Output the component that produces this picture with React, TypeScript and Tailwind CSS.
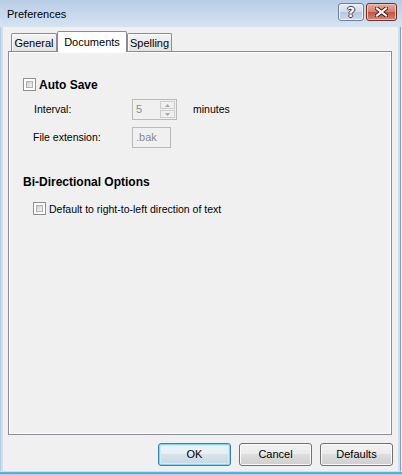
import React from 'react';

const Check: React.FC = () => (
  <div className="w-[13px] h-[13px] shrink-0 border border-[#8f8f8f] bg-white p-[2px]">
    <div className="w-full h-full border border-[#b1b1b1] bg-linear-to-br from-[#cdcdcd] to-[#f6f6f6]" />
  </div>
);

const Tab: React.FC<{ label: string; active?: boolean; w: string }> = ({ label, active, w }) =>
  active ? (
    <div className={`${w} h-[21px] -mb-px z-10 flex items-center justify-center border border-b-0 border-[#898c95] bg-white rounded-t-[2px] text-[11px] text-black`}>
      {label}
    </div>
  ) : (
    <div className={`${w} h-[18px] flex items-center justify-center border border-b-0 border-[#898c95] bg-linear-to-b from-[#f4f4f4] to-[#e4e4e4] shadow-[inset_1px_1px_0_#ffffff] rounded-t-[2px] text-[11px] text-black pt-[1px]`}>
      {label}
    </div>
  );

const Button: React.FC<{ label: string; primary?: boolean }> = ({ label, primary }) => (
  <div
    className={
      primary
        ? 'w-[73px] h-[23px] rounded-[3px] border border-[#3c7fb1] flex items-center justify-center text-[11px] text-black bg-[linear-gradient(to_bottom,#eef5f9_0%,#e6eef3_50%,#d7e2e9_50%,#cad8e1_100%)] shadow-[inset_0_0_0_1px_#7fd7f7,inset_0_0_0_2px_#c9eefc]'
        : 'w-[73px] h-[23px] rounded-[3px] border border-[#707070] flex items-center justify-center text-[11px] text-black bg-[linear-gradient(to_bottom,#f2f2f2_0%,#ebebeb_50%,#dddddd_50%,#cfcfcf_100%)] shadow-[inset_0_0_0_1px_#fbfbfb]'
    }
  >
    {label}
  </div>
);

const App: React.FC = () => {
  return (
    <div className="w-[402px] h-[475px] flex flex-col bg-[#c9daee] font-['Liberation_Sans',Arial,sans-serif] text-[10.5px] text-black overflow-hidden">
      {/* title bar */}
      <div className="h-[27px] shrink-0 flex items-start pl-[7px] pr-[5px] pt-[3px] bg-linear-to-b from-[#b8cde6] to-[#d6e3f2]">
        <span className="mt-[4px] text-[11px] leading-[14px] text-black">Preferences</span>
        <div className="ml-auto flex gap-[2px]">
          <div className="w-[26px] h-[18px] rounded-[3px] border border-[#6b7f99] flex items-center justify-center bg-[linear-gradient(to_bottom,#e6eef8_0%,#cfdcec_50%,#b5c8e0_50%,#cbd9eb_100%)] shadow-[inset_0_0_0_1px_#eef4fb]">
            <span className="font-['DejaVu_Sans',sans-serif] text-[14px] font-bold leading-none text-white [text-shadow:1px_0_0_#33465e,-1px_0_0_#33465e,0_1px_0_#33465e,0_-1px_0_#33465e]">?</span>
          </div>
          <div className="w-[31px] h-[18px] rounded-[3px] border border-[#6d2f27] flex items-center justify-center bg-[linear-gradient(to_bottom,#e9a997_0%,#d8806f_50%,#c3513f_50%,#d48776_100%)] shadow-[inset_0_0_0_1px_#f0c3b6]">
            <svg width="13" height="10" viewBox="0 0 13 10">
              <path d="M2 1.5 L11 8.5 M11 1.5 L2 8.5" stroke="#3a1712" strokeWidth="4" strokeLinecap="square" fill="none" />
              <path d="M2 1.5 L11 8.5 M11 1.5 L2 8.5" stroke="#ffffff" strokeWidth="2.2" strokeLinecap="square" fill="none" />
            </svg>
          </div>
        </div>
      </div>

      <div className="flex-1 flex min-h-0">
        {/* left frame */}
        <div className="w-[3px] shrink-0 bg-[linear-gradient(to_right,#b7cbe2_0_1px,#cfdeef_1px)]" />

        {/* client */}
        <div className="flex-1 flex flex-col bg-[#f0f0f0]">
          <div className="flex items-end h-[24px] pl-[8px]">
            <Tab label="General" w="w-[46px]" />
            <Tab label="Documents" w="w-[70px]" active />
            <Tab label="Spelling" w="w-[45px]" />
          </div>

          <div className="ml-[5px] mr-[6px] h-[384px] border border-[#898c95] shadow-[inset_1px_1px_0_#ffffff,inset_-1px_-1px_0_#ffffff] bg-[#f0f0f0] pl-[14px] pt-[26px] flex flex-col">
            <div className="flex items-center h-[13px] gap-[3px]">
              <Check />
              <span className="font-bold text-[12px] leading-[14px]">Auto Save</span>
            </div>

            <div className="flex items-center h-[21px] mt-[8px] pl-[11px]">
              <span className="w-[98px] shrink-0">Interval:</span>
              <div className="w-[45px] h-[21px] border border-[#b9b9b9] bg-[#f0f0f0] flex">
                <span className="flex-1 pl-[3px] leading-[19px] text-[11px] text-[#8a8a8a]">5</span>
                <div className="w-[17px] flex flex-col p-px gap-px">
                  <div className="flex-1 border border-[#cdcdcd] bg-[#efefef] flex items-center justify-center">
                    <svg width="5" height="3" viewBox="0 0 5 3"><path d="M0 3 L2.5 0 L5 3 Z" fill="#a8a8a8" /></svg>
                  </div>
                  <div className="flex-1 border border-[#cdcdcd] bg-[#efefef] flex items-center justify-center">
                    <svg width="5" height="3" viewBox="0 0 5 3"><path d="M0 0 L2.5 3 L5 0 Z" fill="#a8a8a8" /></svg>
                  </div>
                </div>
              </div>
              <span className="ml-[16px]">minutes</span>
            </div>

            <div className="flex items-center h-[21px] mt-[7px] pl-[10px]">
              <span className="w-[99px] shrink-0">File extension:</span>
              <div className="w-[39px] h-[21px] border border-[#b9b9b9] bg-[#f0f0f0] pl-[3px] leading-[19px] text-[11px] text-[#8a8a8a]">.bak</div>
            </div>

            <div className="mt-[27px] h-[14px] font-bold text-[12px] leading-[14px]">Bi-Directional Options</div>

            <div className="flex items-center h-[13px] mt-[13px] pl-[10px] gap-[3px]">
              <Check />
              <span className="leading-[14px]">Default to right-to-left direction of text</span>
            </div>
          </div>

          <div className="flex justify-end gap-[8px] mt-[8px] pr-[5px]">
            <Button label="OK" primary />
            <Button label="Cancel" />
            <Button label="Defaults" />
          </div>
        </div>

        {/* right frame */}
        <div className="w-[4px] shrink-0 bg-[linear-gradient(to_right,#cfdeef_0_2px,#8a9db3_2px_3px,#e4ecf5_3px)]" />
      </div>

      {/* bottom frame */}
      <div className="h-[4px] shrink-0 bg-[linear-gradient(to_bottom,#cfdeef_0_1px,#4fb2e5_1px_3px,#a6d5ef_3px)]" />
    </div>
  );
};

export default App;
